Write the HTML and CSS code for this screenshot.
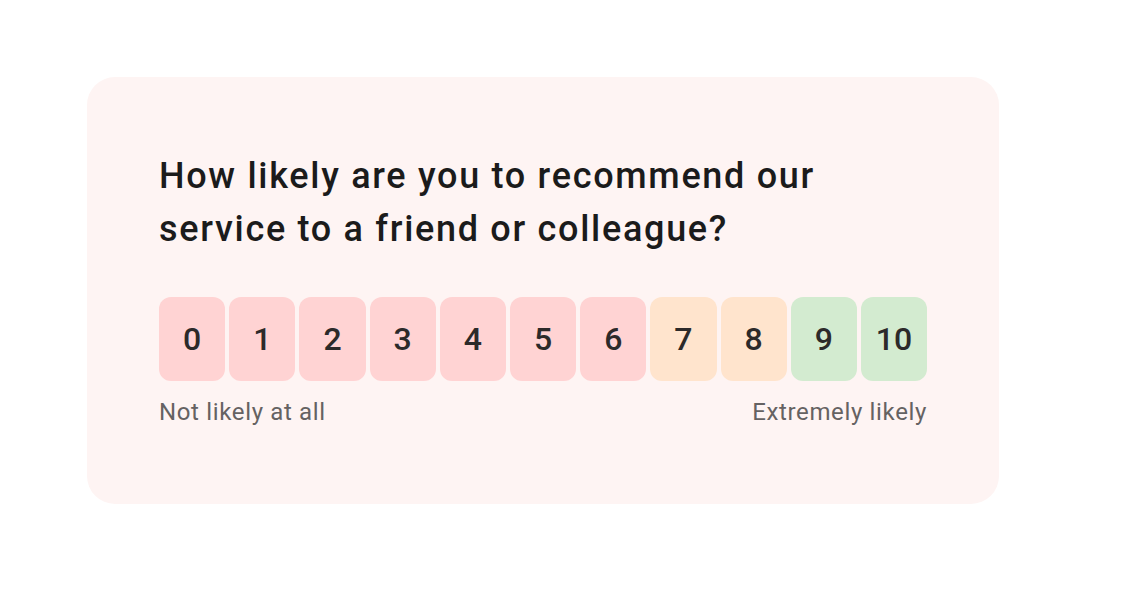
FILE: index.html
```html
<!DOCTYPE html>
<html lang="en">
<head>
<meta charset="utf-8">
<title>NPS survey</title>
<link rel="stylesheet" href="styles.css">
</head>
<body>
<div class="page">
  <section class="card">
    <h1 class="question">How likely are you to recommend our service to a friend or colleague?</h1>
    <div class="scale">
      <button class="score detractor">0</button>
      <button class="score detractor">1</button>
      <button class="score detractor">2</button>
      <button class="score detractor">3</button>
      <button class="score detractor">4</button>
      <button class="score detractor">5</button>
      <button class="score detractor">6</button>
      <button class="score passive">7</button>
      <button class="score passive">8</button>
      <button class="score promoter">9</button>
      <button class="score promoter">10</button>
    </div>
    <div class="legend">
      <span>Not likely at all</span>
      <span>Extremely likely</span>
    </div>
  </section>
</div>
</body>
</html>
```
FILE: styles.css
```css
* { box-sizing: border-box; }
html, body { margin: 0; padding: 0; background: #ffffff; }
body { font-family: Roboto, "Liberation Sans", sans-serif; }
.page { padding: 77px 0 0 87px; }
.card {
  width: 912px;
  background: #fef4f3;
  border-radius: 28px;
  padding: 73px 72px 74px 72px;
}
.question {
  margin: 0;
  font-size: 36px;
  line-height: 53px;
  font-weight: 500;
  letter-spacing: 1.7px;
  color: #1b1b1b;
}
.scale {
  display: flex;
  gap: 4px;
  margin-top: 41px;
}
.score {
  flex: 1;
  height: 84px;
  border: 0;
  border-radius: 12px;
  font-family: inherit;
  font-size: 32px;
  font-weight: 500;
  color: #2c2a2a;
  padding: 0;
}
.detractor { background: #ffd3d3; }
.passive { background: #ffe4cd; }
.promoter { background: #d3ebd0; }
.legend {
  display: flex;
  justify-content: space-between;
  margin-top: 13px;
  font-size: 24px;
  line-height: 36px;
  letter-spacing: 0.65px;
  color: #656262;
}
```
